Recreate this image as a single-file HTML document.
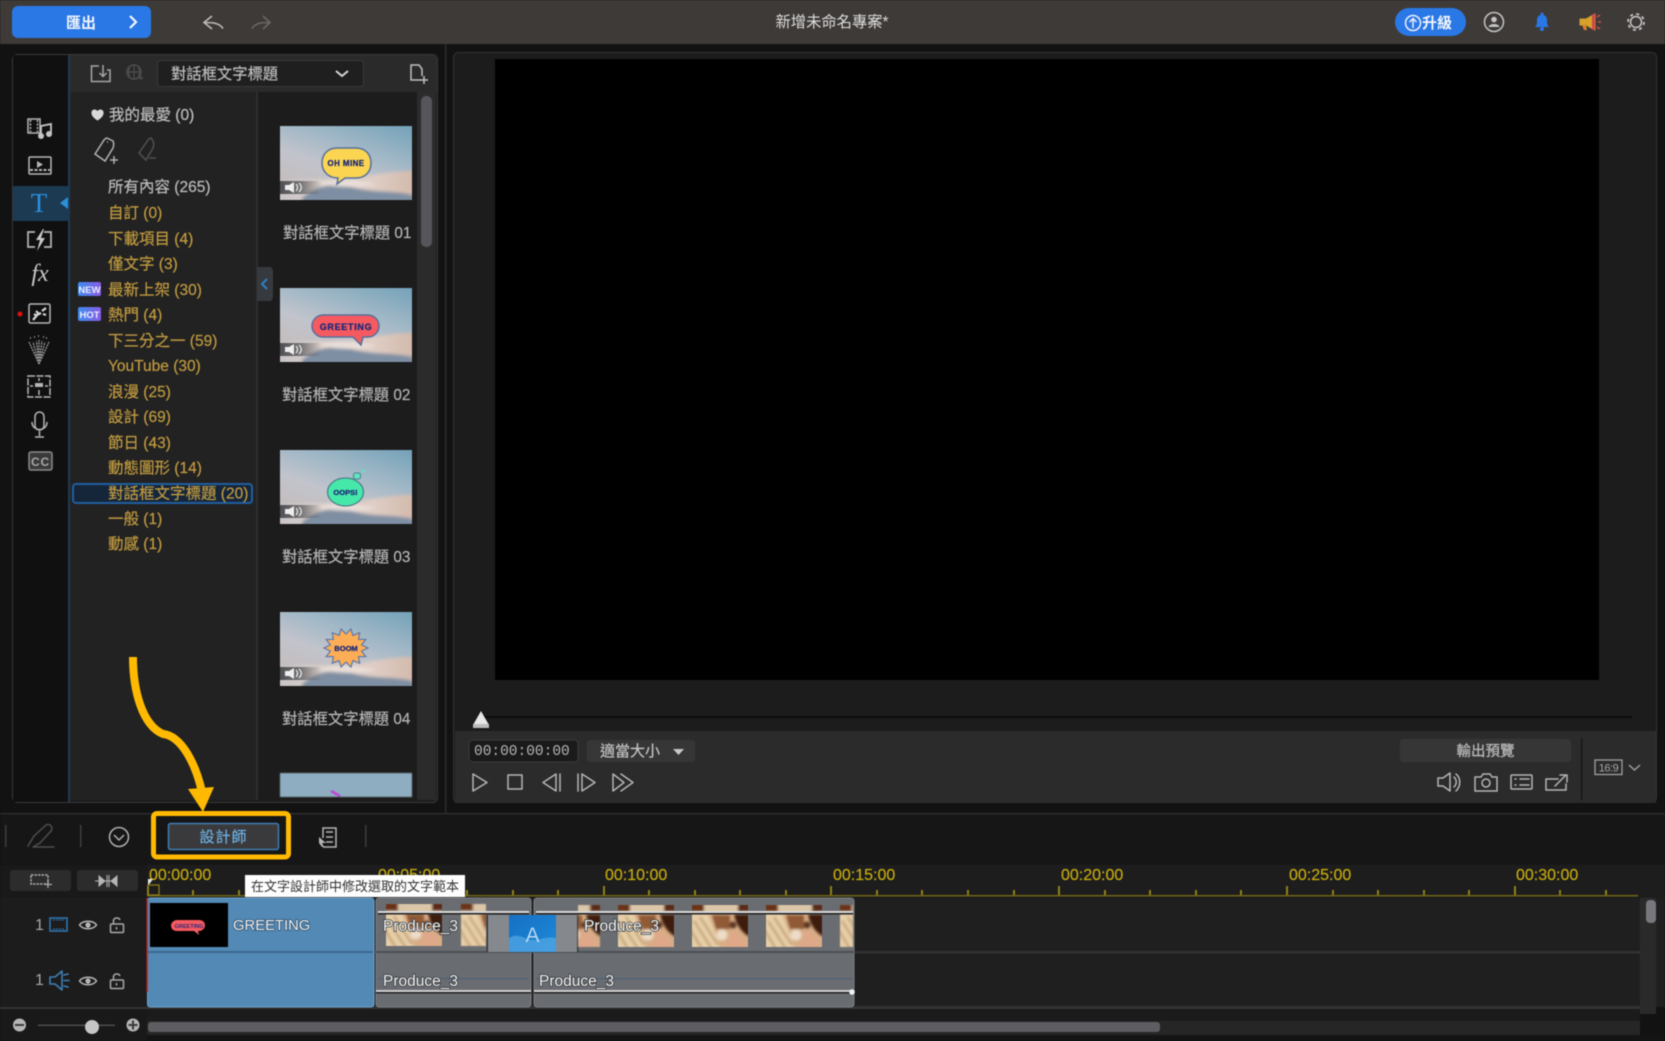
<!DOCTYPE html>
<html><head><meta charset="utf-8"><title>新增未命名專案</title>
<style>
html,body{margin:0;padding:0;background:#111;width:1665px;height:1041px;overflow:hidden}
svg{display:block;filter:blur(.45px)}
text{font-family:"Liberation Sans","Noto Sans CJK TC",sans-serif;font-size:15.5px}
.g{fill:#c09a40;stroke:#c09a40;stroke-width:.2px}
.l{fill:#b4b4b4;font-size:15.3px;stroke:#b4b4b4;stroke-width:.2px}
.y{fill:#c8ad10;font-size:16px;stroke:#c8ad10;stroke-width:.15px}
.p{fill:#f6f6f6;font-size:15.5px;paint-order:stroke;stroke:#33363a;stroke-width:1.5px}
.i{fill:none;stroke:#b5b5b5;stroke-width:1.5;stroke-linejoin:round;stroke-linecap:round}
.d{fill:none;stroke:#4e4e4e;stroke-width:1.5;stroke-linejoin:round;stroke-linecap:round}
.b{fill:none;stroke:#3f7fb5;stroke-width:1.6;stroke-linejoin:round;stroke-linecap:round}
.n{fill:#1e2a78;font-weight:700;stroke:#1e2a78;stroke-width:.3px}
</style></head><body>
<svg width="1665" height="1041" viewBox="0 0 1665 1041" xmlns="http://www.w3.org/2000/svg">
<defs>
<filter id="soft" x="-10%" y="-10%" width="120%" height="120%"><feGaussianBlur stdDeviation="1.6"/></filter>
<filter id="soft2" x="-5%" y="-5%" width="110%" height="110%"><feGaussianBlur stdDeviation="1.3"/></filter>
<linearGradient id="sky" x1="1" y1="0" x2="0.35" y2="1">
<stop offset="0" stop-color="#74a2b9"/><stop offset=".38" stop-color="#9fb7c6"/><stop offset=".68" stop-color="#c2c4cc"/><stop offset="1" stop-color="#c4bcbc"/>
</linearGradient>
<linearGradient id="cl" x1="0" y1="0" x2="1" y2="0">
<stop offset="0" stop-color="#c8c4c8"/><stop offset=".3" stop-color="#d8cdc8"/><stop offset=".7" stop-color="#dfcdc4"/><stop offset="1" stop-color="#d2b8aa"/>
</linearGradient>
<linearGradient id="bd" x1="0" y1="0" x2="1" y2="0"><stop offset="0" stop-color="#3d8cf0"/><stop offset="1" stop-color="#8a5ce6"/></linearGradient>
<linearGradient id="fade" x1="0" y1="0" x2="1" y2="0"><stop offset="0" stop-color="#3a3c40" stop-opacity=".85"/><stop offset=".5" stop-color="#3a3c40" stop-opacity=".6"/><stop offset="1" stop-color="#3a3c40" stop-opacity="0"/></linearGradient>
<linearGradient id="blueA" x1="0" y1="0" x2="1" y2="1"><stop offset="0" stop-color="#1670c4"/><stop offset="1" stop-color="#1f8ad8"/></linearGradient>
<symbol id="thumb" width="132" height="74" viewBox="0 0 132 74" overflow="hidden">
<rect width="132" height="74" fill="url(#sky)"/>
<g filter="url(#soft)">
<path d="M-4 56C25 50 50 55 75 52C100 48 120 44 136 45L136 78L-4 78Z" fill="url(#cl)"/>
<path d="M22 72C36 60 52 56 75 62C95 67 118 64 136 70L136 80L22 80Z" fill="#7f8fa3"/>
<path d="M36 57C55 52 80 54 96 58C80 62 55 62 36 57Z" fill="#ece2dc" opacity=".85"/>
</g>
<rect x="0" y="55" width="42" height="13" fill="url(#fade)"/>
<path d="M5 59h4l5-3v11l-5-3H5z" fill="#eee"/>
<path d="M16 58c2 2 2 5 0 7M19 57c3 3 3 6 0 9" fill="none" stroke="#eee" stroke-width="1.200"/>
</symbol>
<symbol id="photo" width="56" height="42" viewBox="0 0 56 42" overflow="hidden">
<rect width="56" height="42" fill="#d7ad87"/>
<g filter="url(#soft2)">
<rect x="-2" y="-2" width="60" height="10" fill="#dcc6a8"/>
<rect x="-2" y="-2" width="14" height="9" fill="#6a3319"/><rect x="46" y="-2" width="12" height="9" fill="#5a2c14"/>
<path d="M-2 9H16C20 20 26 32 28 44H-2Z" fill="#e6cfa8"/>
<path d="M2 16L20 44M-2 24L10 44M8 12L26 40" stroke="#c09a6e" stroke-width="2"/>
<path d="M20 10H38V24H24Z" fill="#8f5a36"/>
<path d="M42 9H58V32C50 28 44 20 42 9Z" fill="#3c1d0f"/>
<circle cx="30" cy="30" r="5.500" fill="#ecdcc8"/>
<path d="M38 26C46 28 54 34 54 44H34Z" fill="#dfa888"/>
<circle cx="41" cy="20" r="3.500" fill="#5c3420"/>
</g>
</symbol>
<symbol id="eye" width="20" height="14" viewBox="0 0 20 14"><path d="M1.500 7C5 2 15 2 18.500 7C15 12 5 12 1.500 7Z" fill="none" stroke="#b8b8b8" stroke-width="1.500"/><circle cx="10" cy="7" r="2.600" fill="#b8b8b8"/></symbol>
<symbol id="lock" width="18" height="18" viewBox="0 0 18 18"><rect x="2.500" y="8" width="13" height="8.500" rx="1" fill="none" stroke="#a8a8a8" stroke-width="1.500"/><path d="M5.500 8V4.600C5.500 1.500 11 1 12 4M8.500 11v2.500" fill="none" stroke="#a8a8a8" stroke-width="1.500"/></symbol>
</defs>

<!-- background -->
<rect width="1665" height="1041" fill="#121212"/>
<rect x="445" y="44" width="1.500" height="769" fill="#2c2c2c"/>
<!-- top bar -->
<rect width="1665" height="44" fill="#3e3a38"/>
<rect x="12" y="6" width="139" height="32" rx="6" fill="#2a78e6"/>
<text x="66" y="28" fill="#f0f4fa" style="font-size:15px;font-weight:700">匯出</text>
<path d="M130 16l6 6-6 6" fill="none" stroke="#f4f7fb" stroke-width="2.200"/>
<path d="M212 16l-8 6.500 8 6.500M204 22.500c8 0 15 0 19 6" fill="none" stroke="#bcbcbc" stroke-width="1.600"/>
<path d="M263 16l7 6.500-7 6.500M270 22.500c-8 0-14 0-18 6" fill="none" stroke="#6a6866" stroke-width="1.600"/>
<text x="832" y="27" text-anchor="middle" fill="#dedede" style="font-size:15.300px">新增未命名專案*</text>
<rect x="1395" y="8" width="71" height="28" rx="14" fill="#2a78e6"/>
<circle cx="1413" cy="23" r="7.500" fill="none" stroke="#eef" stroke-width="1.500"/>
<path d="M1413 28v-9M1409.500 22l3.500-3.500 3.500 3.500" fill="none" stroke="#eef" stroke-width="1.500"/>
<text x="1422" y="28" fill="#f2f6fc" style="font-size:15px;font-weight:700">升級</text>
<circle cx="1494" cy="22" r="9.500" fill="none" stroke="#c4c4c4" stroke-width="1.500"/>
<circle cx="1494" cy="19.500" r="2.800" fill="#c4c4c4"/><path d="M1488.500 27c1-4 10-4 11 0z" fill="#c4c4c4"/>
<path d="M1535 27c2-2 2-4 2-7c0-7 10-7 10 0c0 3 0 5 2 7z" fill="#2a78e6"/><circle cx="1542" cy="29" r="2" fill="#2a78e6"/><circle cx="1542" cy="14" r="1.500" fill="#2a78e6"/>
<path d="M1580 19h6l9-5v16l-9-5h-6z" fill="#d9a02a" stroke="#c9a032"/>
<path d="M1582 25l2 5h3l-1-5" fill="#d9822a"/>
<path d="M1592 14.500l3-1v17l-3-1z" fill="#d0484a"/>
<path d="M1597 17l3-2M1598 22h3M1597 27l3 2" stroke="#d04a4a" stroke-width="1.500"/>
<circle cx="1636" cy="22" r="5.500" fill="none" stroke="#c8c8c8" stroke-width="1.500"/>
<circle cx="1636" cy="22" r="8" fill="none" stroke="#c8c8c8" stroke-width="1.800" stroke-dasharray="3 3.280"/>

<!-- left panel -->
<rect x="12.500" y="54.500" width="425" height="748" rx="5" fill="#1c1c1c" stroke="#383838"/>
<rect x="13" y="55" width="55" height="747" fill="#101010"/>
<rect x="68" y="55" width="2" height="747" fill="#1d3a55"/>
<rect x="70" y="55" width="367" height="37" fill="#2a2a2a"/>
<rect x="70" y="92" width="187" height="708" fill="#222"/>
<rect x="256" y="92" width="2" height="708" fill="#2e2e2e"/>
<rect x="258" y="92" width="159" height="708" fill="#1c1c1c"/>
<rect x="417" y="92" width="19" height="708" fill="#2b2b2b"/>
<rect x="421" y="96" width="11" height="151" rx="5" fill="#55555b"/>
<!-- header -->
<path d="M99 66h-7.500v15.500h18.500V70h-3M103 65v11M99.500 73l3.500 3.500 3.500-3.500" fill="none" stroke="#a6a6a6" stroke-width="1.500"/>
<circle cx="134" cy="72" r="7" fill="none" stroke="#4d4d4d" stroke-width="1.500"/><path d="M127 72h14M134 65v14M130 66c-2 4-2 8 0 12M138 66c2 4 2 8 0 12M139 78h4M141 76v4" fill="none" stroke="#4d4d4d" stroke-width="1.200"/>
<rect x="157.500" y="60.500" width="206" height="26" rx="3" fill="#1f1f1f" stroke="#3a3a3a"/>
<text x="171" y="79" fill="#bdbdbd" stroke="#bdbdbd" stroke-width=".2" style="font-size:15.300px">對話框文字標題</text>
<path d="M336 71l6 5 6-5" fill="none" stroke="#d6d6d6" stroke-width="2"/>
<path d="M422 76v-7l-3-4h-8v15h10M424 76v8M420 80h8" fill="none" stroke="#c0c0c0" stroke-width="1.500"/>

<!-- sidebar icons -->
<rect x="13" y="186" width="55" height="35" fill="#1c3a52"/>
<path d="M60 203l8-6v12z" fill="#2b8fd9"/>
<rect x="28" y="119" width="12" height="14" fill="none" stroke="#b5b5b5" stroke-width="1.500"/><path d="M30.500 120v12M37.500 120v12" stroke="#b5b5b5" stroke-dasharray="2 1.500" stroke-width="1.500"/>
<path d="M41 136v-10l10-2v10" fill="none" stroke="#c5c5c5" stroke-width="1.800"/><circle cx="41" cy="136" r="3" fill="#c5c5c5"/><circle cx="49" cy="134" r="3" fill="#c5c5c5"/>
<rect x="29" y="157" width="22" height="17" rx="1" fill="none" stroke="#b5b5b5" stroke-width="1.500"/><path d="M37 161l6 3.500-6 3.500z" fill="#b5b5b5"/><path d="M30 170h20" stroke="#b5b5b5" stroke-dasharray="3 1.500" stroke-width="2"/>
<text x="39" y="212" text-anchor="middle" fill="#2b90de" style="font-family:'Liberation Serif',serif;font-size:27px">T</text>
<path d="M35 232h-7v15h7M44 232h7v15h-7" fill="none" stroke="#b5b5b5" stroke-width="1.700"/><path d="M43 229l-7 11h4l-3 11 8-13h-4l3-9z" fill="#c8c8c8"/>
<text x="40" y="281" text-anchor="middle" fill="#c8c8c8" style="font-family:'Liberation Serif',serif;font-style:italic;font-size:24px">fx</text>
<circle cx="20" cy="314" r="2.500" fill="#e01010"/>
<rect x="29" y="304" width="21" height="19" rx="1.500" fill="none" stroke="#b5b5b5" stroke-width="1.500"/>
<path d="M33 320l5-6M36 311l3 3 2-1M42 311l4-3M34 314l3 2M43 314l3 1" stroke="#d8d8d8" stroke-width="2.200"/>
<path d="M39 364L29 342M39 364L33 342M39 364L36.500 341M39 364L39 340M39 364L42 341M39 364L45 342M39 364L49 342" stroke="#9a9a9a" stroke-width="1.300" stroke-dasharray="2 .8" fill="none"/>
<path d="M30 338h1M38 336h1M46 338h1M34 337h1M43 337h1" stroke="#aaa" stroke-width="1.500"/>
<rect x="28" y="376" width="22" height="21" fill="none" stroke="#b5b5b5" stroke-width="1.500" stroke-dasharray="7 1.500"/><rect x="35" y="383" width="8" height="4" fill="#b5b5b5"/><path d="M39 378v3M39 390v5M30 386h3M45 386h3" stroke="#b5b5b5" stroke-width="1.500"/>
<rect x="35" y="412" width="9" height="18" rx="4.500" fill="none" stroke="#b5b5b5" stroke-width="1.500"/><path d="M32 422c0 10 15 10 15 0M39.500 431v5M35 437h9" fill="none" stroke="#b5b5b5" stroke-width="1.500"/>
<rect x="29" y="452" width="23" height="18" rx="2" fill="#3a3a3a" stroke="#8a8a8a" stroke-width="1.500"/>
<text x="40.500" y="466" text-anchor="middle" fill="#a8a8a8" style="font-size:12px;font-weight:700;letter-spacing:.8px">CC</text>

<!-- category list -->
<path d="M97.500 120c-8-5-6-10-3-10 2 0 3 2 3 2s1-2 3-2c3 0 5 5-3 10z" fill="#d8d8d8" stroke="#d8d8d8"/>
<text x="109" y="120" fill="#bfbfbf" stroke="#bfbfbf" stroke-width=".2">我的最愛 (0)</text>
<path d="M107 138c-1 0-2 1-3 2l-9 14 10 7 8-13c1-3 1-5 0-7zM107 142h1" fill="none" stroke="#b0b0b0" stroke-width="1.500"/><path d="M114 156v8M110 160h8" stroke="#b0b0b0" stroke-width="1.500"/>
<path d="M151 138c-1 0-2 1-3 2l-9 13 7 7 7-12c1-3 1-5 0-7zM149 158h7" fill="none" stroke="#505050" stroke-width="1.500"/>
<text x="108" y="192" fill="#bcbcbc" stroke="#bcbcbc" stroke-width=".2">所有內容 (265)</text>
<text x="108" y="218" class="g">自訂 (0)</text>
<text x="108" y="244" class="g">下載項目 (4)</text>
<text x="108" y="269" class="g">僅文字 (3)</text>
<text x="108" y="295" class="g">最新上架 (30)</text>
<text x="108" y="320" class="g">熱門 (4)</text>
<text x="108" y="346" class="g">下三分之一 (59)</text>
<text x="108" y="371" class="g">YouTube (30)</text>
<text x="108" y="397" class="g">浪漫 (25)</text>
<text x="108" y="422" class="g">設計 (69)</text>
<text x="108" y="448" class="g">節日 (43)</text>
<text x="108" y="473" class="g">動態圖形 (14)</text>
<rect x="73" y="484" width="179" height="19" rx="3" fill="#16263a" stroke="#1f5f9f" stroke-width="2"/>
<text x="108" y="498.500" class="g">對話框文字標題 (20)</text>
<text x="108" y="524" class="g">一般 (1)</text>
<text x="108" y="549" class="g">動感 (1)</text>
<rect x="78" y="282" width="23" height="14" rx="2" fill="url(#bd)"/>
<text x="89.500" y="293" text-anchor="middle" fill="#e8eefc" style="font-size:9.500px;font-weight:700">NEW</text>
<rect x="78" y="307" width="23" height="14" rx="2" fill="url(#bd)"/>
<text x="89.500" y="318" text-anchor="middle" fill="#e8eefc" style="font-size:9.500px;font-weight:700">HOT</text>
<!-- collapse tab -->
<path d="M257 267h12a4 4 0 0 1 4 4v26a4 4 0 0 1-4 4h-12z" fill="#363a3e"/>
<path d="M267 279l-5 5 5 5" fill="none" stroke="#2f7fc4" stroke-width="2"/>

<!-- thumbs -->
<use href="#thumb" x="280" y="126"/>
<path d="M337 148h19c9 0 15 6 15 15s-6 15-15 15h-11l-8 6 1-6c-9 0-16-6-16-15s6-15 15-15z" fill="#fbd551" stroke="#55709c" stroke-width="1.500"/>
<text x="346" y="166" text-anchor="middle" class="n" style="font-size:8px;letter-spacing:.4px">OH MINE</text>
<text x="283" y="238" class="l">對話框文字標題 01</text>

<use href="#thumb" x="280" y="288"/>
<path d="M323 315h45c6 0 11 5 11 11s-5 11-11 11h-5l-2 8-8-8h-30c-6 0-11-5-11-11s5-11 11-11z" fill="#f65a60" stroke="#55709c" stroke-width="1.500"/>
<text x="346" y="330" text-anchor="middle" class="n" style="font-size:9px;letter-spacing:.7px">GREETING</text>
<text x="282" y="400" class="l">對話框文字標題 02</text>

<use href="#thumb" x="280" y="450"/>
<ellipse cx="345.500" cy="492" rx="18" ry="14" fill="#45e8a8" stroke="#4f7f8c" stroke-width="1.300"/>
<rect x="353.500" y="473" width="7" height="6" rx="2" fill="#5fe6c0" stroke="#4f7f8c"/><path d="M362 472l3-2" stroke="#5fe6c0" stroke-width="2"/>
<text x="345.500" y="495" text-anchor="middle" class="n" style="font-size:7.500px">OOPS!</text>
<text x="282" y="562" class="l">對話框文字標題 03</text>

<use href="#thumb" x="280" y="612"/>
<path d="M368 648L361.600 651.100L365.800 656.500L358.500 656.700L359.700 663.200L352.900 660.600L350.900 667L346 662L341.100 667L339.100 660.600L332.300 663.200L333.500 656.700L326.200 656.500L330.400 651.100L324 648L330.400 644.900L326.200 639.500L333.500 639.300L332.300 632.800L339.100 635.400L341.100 629L346 634L350.900 629L352.900 635.400L359.700 632.800L358.500 639.300L365.800 639.500L361.600 644.900Z" fill="#fdad55" stroke="#5f78a8" stroke-width="1.200"/>
<text x="346" y="651" text-anchor="middle" class="n" style="font-size:7.500px">BOOM</text>
<text x="282" y="724" class="l">對話框文字標題 04</text>

<svg x="280" y="773" width="132" height="24"><rect width="132" height="24" fill="#8fadc0"/><path d="M51 18l9 5" stroke="#c040d8" stroke-width="2.500"/></svg>

<!-- preview panel -->
<rect x="453.500" y="52.500" width="1203" height="750" rx="5" fill="#1c1c1c" stroke="#333"/>
<rect x="495" y="59" width="1104" height="621" fill="#000"/>
<rect x="480" y="716" width="1152" height="2" fill="#0c0c0c"/>
<rect x="455" y="731" width="1201" height="72" fill="#2b2b2b"/>
<path d="M481 711l8 14H473z" fill="#e8e8e8"/><rect x="473" y="724" width="16" height="4" fill="#bcbcbc"/>
<rect x="469" y="740" width="109" height="22" rx="4" fill="#1a1a1a" stroke="#3c3c3c"/>
<text x="474" y="755" fill="#b5b5b5" style="font-family:'Liberation Mono',monospace;font-size:14.500px">00:00:00:00</text>
<rect x="587" y="740" width="108" height="22" rx="3" fill="#363636"/>
<text x="600" y="756" fill="#c4c4c4" stroke="#c4c4c4" stroke-width=".2" style="font-size:15px">適當大小</text>
<path d="M673 749h11l-5.500 6z" fill="#c8c8c8"/>
<rect x="1400" y="739" width="171" height="23" rx="3" fill="#363636"/>
<text x="1485.500" y="756" text-anchor="middle" fill="#b8b8b8" stroke="#b8b8b8" stroke-width=".3" style="font-size:14.500px">輸出預覽</text>
<!-- playback -->
<path d="M473 774l14 8.500-14 8.500z" class="i"/>
<rect x="508" y="775" width="14" height="14" class="i"/>
<path d="M556 774l-13 8.500 13 8.500zM560 774v17" class="i"/>
<path d="M578 774v17M582 774l13 8.500-13 8.500z" class="i"/>
<path d="M613 774l11 8.500-11 8.500zM621 774l12 8.500-12 8.500" class="i"/>
<!-- right controls -->
<path d="M1438 778h5l7-5v18l-7-5h-5z M1454 777c3 3 3 7 0 10M1456 774c5 4 5 12 0 17" class="i"/>
<path d="M1475 777h6l2-3h7l2 3h5v14h-22z" class="i"/><circle cx="1486" cy="783" r="4" class="i"/>
<rect x="1511" y="775" width="21" height="14" rx="1" class="i"/><path d="M1515 779h1M1515 785h1M1520 779h9M1520 785h9" class="i" stroke-width="1.800"/>
<path d="M1558 779h-12v11h20v-6M1555 786l11-11M1560 775h7v7" class="i"/>
<rect x="1581" y="738" width="1.500" height="62" fill="#171717"/>
<rect x="1595" y="760" width="27" height="14.500" fill="none" stroke="#a0a0a0" stroke-width="1.300"/>
<text x="1608.500" y="771.500" text-anchor="middle" fill="#a8a8a8" style="font-size:11px;letter-spacing:-.5px">16:9</text>
<path d="M1629 765l5.500 5 5.500-5" fill="none" stroke="#a0a0a0" stroke-width="1.400"/>

<!-- divider -->
<rect y="813" width="1665" height="1.500" fill="#2c2c2c"/>
<rect y="815" width="1665" height="50" fill="#161616"/>
<!-- toolbar -->
<rect x="5" y="825" width="1.500" height="22" fill="#3e3e3e"/>
<rect x="80" y="825" width="1.500" height="22" fill="#3e3e3e"/>
<rect x="365" y="825" width="1.500" height="22" fill="#3e3e3e"/>
<path d="M28 846l6-10 12-11c3-2 8 2 5 6l-11 12-7 4h21" class="d"/>
<circle cx="119" cy="837" r="9.500" fill="none" stroke="#b0b0b0" stroke-width="1.500"/><path d="M114 835l5 5 5-5" fill="none" stroke="#b0b0b0" stroke-width="1.500"/>
<rect x="168.500" y="823.500" width="110" height="26" rx="2" fill="#3a3a3c" stroke="#3f7cb3" stroke-width="1.500"/>
<text x="223.500" y="842" text-anchor="middle" fill="#6eb1e4" stroke="#6eb1e4" stroke-width=".2" style="font-size:15px;letter-spacing:1px">設計師</text>
<path d="M323 838v-10h13v19h-13" fill="none" stroke="#b4b4b4" stroke-width="1.500"/><path d="M326 832h7M326 837h7M326 842h7" stroke="#b4b4b4" stroke-width="1.500"/>
<path d="M319 837l7 6-4 0 2 4-2 0-3-4z" fill="#b4b4b4"/>

<!-- timeline -->
<rect y="865" width="1665" height="33" fill="#1d1d1d"/>
<rect x="0" y="865" width="147" height="33" fill="#191919"/>
<rect x="10" y="870" width="61" height="21" rx="3" fill="#2c2c2c"/>
<rect x="31" y="875" width="17" height="9" fill="none" stroke="#a8a8a8" stroke-width="1.500" stroke-dasharray="2.500 1"/><path d="M48 881v7M45 884.500h7" stroke="#a8a8a8" stroke-width="1.300"/>
<rect x="77" y="870" width="61" height="21" rx="3" fill="#2c2c2c"/>
<path d="M99 876l6 5-6 5zM117 876l-6 5 6 5zM107 875v12M109 875v12M95 881h22" fill="#b5b5b5" stroke="#b5b5b5" stroke-width="1"/>
<rect x="147" y="895" width="1491" height="1.500" fill="#6f6413"/>
<g fill="#8f8018">
<rect x="147" y="886" width="2" height="9"/><rect x="192" y="890" width="2" height="5"/><rect x="238" y="890" width="2" height="5"/><rect x="283" y="890" width="2" height="5"/><rect x="329" y="890" width="2" height="5"/><rect x="375" y="886" width="2" height="9"/><rect x="420" y="890" width="2" height="5"/><rect x="466" y="890" width="2" height="5"/><rect x="512" y="890" width="2" height="5"/><rect x="557" y="890" width="2" height="5"/><rect x="603" y="886" width="2" height="9"/><rect x="648" y="890" width="2" height="5"/><rect x="694" y="890" width="2" height="5"/><rect x="739" y="890" width="2" height="5"/><rect x="785" y="890" width="2" height="5"/><rect x="830" y="886" width="2" height="9"/><rect x="876" y="890" width="2" height="5"/><rect x="921" y="890" width="2" height="5"/><rect x="967" y="890" width="2" height="5"/><rect x="1013" y="890" width="2" height="5"/><rect x="1058" y="886" width="2" height="9"/><rect x="1104" y="890" width="2" height="5"/><rect x="1149" y="890" width="2" height="5"/><rect x="1195" y="890" width="2" height="5"/><rect x="1240" y="890" width="2" height="5"/><rect x="1286" y="886" width="2" height="9"/><rect x="1332" y="890" width="2" height="5"/><rect x="1377" y="890" width="2" height="5"/><rect x="1423" y="890" width="2" height="5"/><rect x="1468" y="890" width="2" height="5"/><rect x="1514" y="886" width="2" height="9"/><rect x="1559" y="890" width="2" height="5"/><rect x="1605" y="890" width="2" height="5"/>
</g>
<text x="149" y="880" class="y">00:00:00</text>
<text x="378" y="880" class="y">00:05:00</text>
<text x="605" y="880" class="y">00:10:00</text>
<text x="833" y="880" class="y">00:15:00</text>
<text x="1061" y="880" class="y">00:20:00</text>
<text x="1289" y="880" class="y">00:25:00</text>
<text x="1516" y="880" class="y">00:30:00</text>
<path d="M148 879h5l-5 7z" fill="#e6e6e6"/><rect x="148" y="885" width="11" height="10" fill="none" stroke="#8f8018" stroke-width="1.200"/>
<rect x="245" y="875" width="220" height="22" fill="#fdfdfd"/>
<text x="251" y="891" fill="#333" style="font-size:13px">在文字設計師中修改選取的文字範本</text>

<!-- tracks -->
<rect y="898" width="1665" height="109" fill="#1f1f1f"/>
<rect y="951" width="1640" height="2.500" fill="#333"/>
<rect y="1006" width="1640" height="3" fill="#333"/>
<rect y="898" width="147" height="109" fill="#1c1c1c"/>
<text x="35" y="930" fill="#a8a8a8" style="font-size:16px">1</text>
<rect x="50" y="918" width="17" height="13" fill="none" stroke="#2f75ad" stroke-width="1.600"/><path d="M53 920h11M53 929h11" stroke="#2f75ad" stroke-dasharray="2 1"/>
<use href="#eye" x="78" y="918"/><use href="#lock" x="108" y="916"/>
<text x="35" y="985" fill="#a8a8a8" style="font-size:16px">1</text>
<path d="M50 977h5l7-6v19l-7-6h-5zM64 975l4-1M64 980.500h5M64 986l4 1" class="b"/>
<use href="#eye" x="78" y="974"/><use href="#lock" x="108" y="972"/>
<!-- blue clip -->
<rect x="147.500" y="898" width="226.500" height="109" rx="3" fill="#5289b5" stroke="#6ea3cb"/>
<rect x="148" y="951" width="225" height="2" fill="#3b6a8f"/>
<rect x="146.500" y="898" width="1.500" height="94" fill="#c5282d"/>
<rect x="150" y="903" width="78" height="44" fill="#000"/>
<path d="M177 920h22c4 0 6 2.500 6 5.500s-3 5.500-6 5.500h-1l1 4-5-4h-17c-4 0-6-2.500-6-5.500s3-5.500 6-5.500z" fill="#f65a60"/>
<text x="189" y="928" text-anchor="middle" fill="#2a2a80" style="font-size:5.500px;font-weight:700">GREETING</text>
<text x="233" y="930" fill="#f2f2f2" style="font-size:14.800px;paint-order:stroke;stroke:#2d4f6b;stroke-width:1.500px">GREETING</text>
<!-- gray clip 1 -->
<rect x="376" y="898" width="155" height="109" rx="3" fill="#696c71" stroke="#7b7e83"/>
<rect x="376" y="951" width="155" height="2" fill="#4c4f53"/>
<use href="#photo" x="386" y="904"/><svg x="461" y="904" width="25" height="42"><use href="#photo"/></svg>
<rect x="378" y="911" width="151" height="2" fill="#d9d9d9"/><rect x="378" y="913" width="151" height="1.500" fill="#1f1f1f"/>
<rect x="488" y="915" width="21" height="37" fill="#85888c"/><rect x="486.500" y="915" width="1.500" height="37" fill="#35383b"/>
<text x="383" y="931" class="p">Produce_3</text>
<rect x="378" y="978" width="151" height="1.200" fill="#4f6378"/>
<text x="383" y="986" class="p">Produce_3</text>
<rect x="376" y="990" width="155" height="2" fill="#cfcfcf"/><rect x="376" y="992" width="155" height="1.500" fill="#1f1f1f"/>
<!-- gray clip 2 -->
<rect x="534" y="898" width="320" height="109" rx="3" fill="#696c71" stroke="#7b7e83"/>
<rect x="534" y="951" width="320" height="2" fill="#4c4f53"/>
<rect x="509" y="915" width="47" height="37" fill="url(#blueA)"/>
<path d="M509 938c10-6 16 2 24 2s15-4 23-2v14h-47z" fill="#55a8e4" opacity=".7"/>
<text x="532.500" y="942" text-anchor="middle" fill="#b5d8f2" style="font-size:21px">A</text>
<rect x="556" y="915" width="21" height="37" fill="#85888c"/><rect x="577" y="915" width="1.500" height="37" fill="#35383b"/>
<svg x="578" y="905" width="22" height="42"><use href="#photo" x="-34"/></svg>
<use href="#photo" x="618" y="905"/><use href="#photo" x="692" y="905"/><use href="#photo" x="766" y="905"/>
<svg x="840" y="905" width="13" height="42"><use href="#photo"/></svg>
<rect x="536" y="911" width="317" height="2" fill="#d9d9d9"/><rect x="536" y="913" width="317" height="1.500" fill="#1f1f1f"/>
<text x="584" y="931" class="p">Produce_3</text>
<rect x="536" y="978" width="317" height="1.200" fill="#4f6378"/>
<text x="539" y="986" class="p">Produce_3</text>
<rect x="534" y="990" width="318" height="2" fill="#cfcfcf"/><rect x="534" y="992" width="318" height="1.500" fill="#1f1f1f"/>
<circle cx="852" cy="992" r="2.800" fill="#f2f2f2"/>
<!-- right track scroll -->
<rect x="1640" y="898" width="16" height="116" fill="#2a2a2a"/>
<rect x="1646" y="900" width="10" height="23" rx="4" fill="#77777d"/>
<!-- bottom -->
<rect y="1009" width="1640" height="12" fill="#1b1b1b"/>
<rect y="1021" width="1640" height="14" fill="#262626"/>
<rect y="1035" width="1665" height="6" fill="#141414"/>
<rect y="1009" width="147" height="32" fill="#191919"/>
<rect x="148" y="1022" width="1012" height="10" rx="3" fill="#5d5d62"/>
<circle cx="19.500" cy="1025" r="6.500" fill="#b5b5b5"/><rect x="15" y="1024" width="9" height="2" fill="#3a3a3a"/>
<rect x="38" y="1024.500" width="77" height="1.500" fill="#4e4e4e"/>
<circle cx="92" cy="1027" r="7" fill="#c6c6c6"/>
<circle cx="133" cy="1025" r="6.500" fill="#b5b5b5"/><path d="M128.500 1025h9M133 1020.500v9" stroke="#3a3a3a" stroke-width="2"/>

<!-- annotation -->
<rect x="153.500" y="813.500" width="135" height="43.500" rx="3.500" fill="none" stroke="#ffb900" stroke-width="5"/>
<path d="M133 657C133 690 142 725 163 734C182 736 196 765 202 792" fill="none" stroke="#ffb900" stroke-width="8"/>
<path d="M188 789L214 787L203 812Z" fill="#ffb900"/>
</svg>
</body></html>
